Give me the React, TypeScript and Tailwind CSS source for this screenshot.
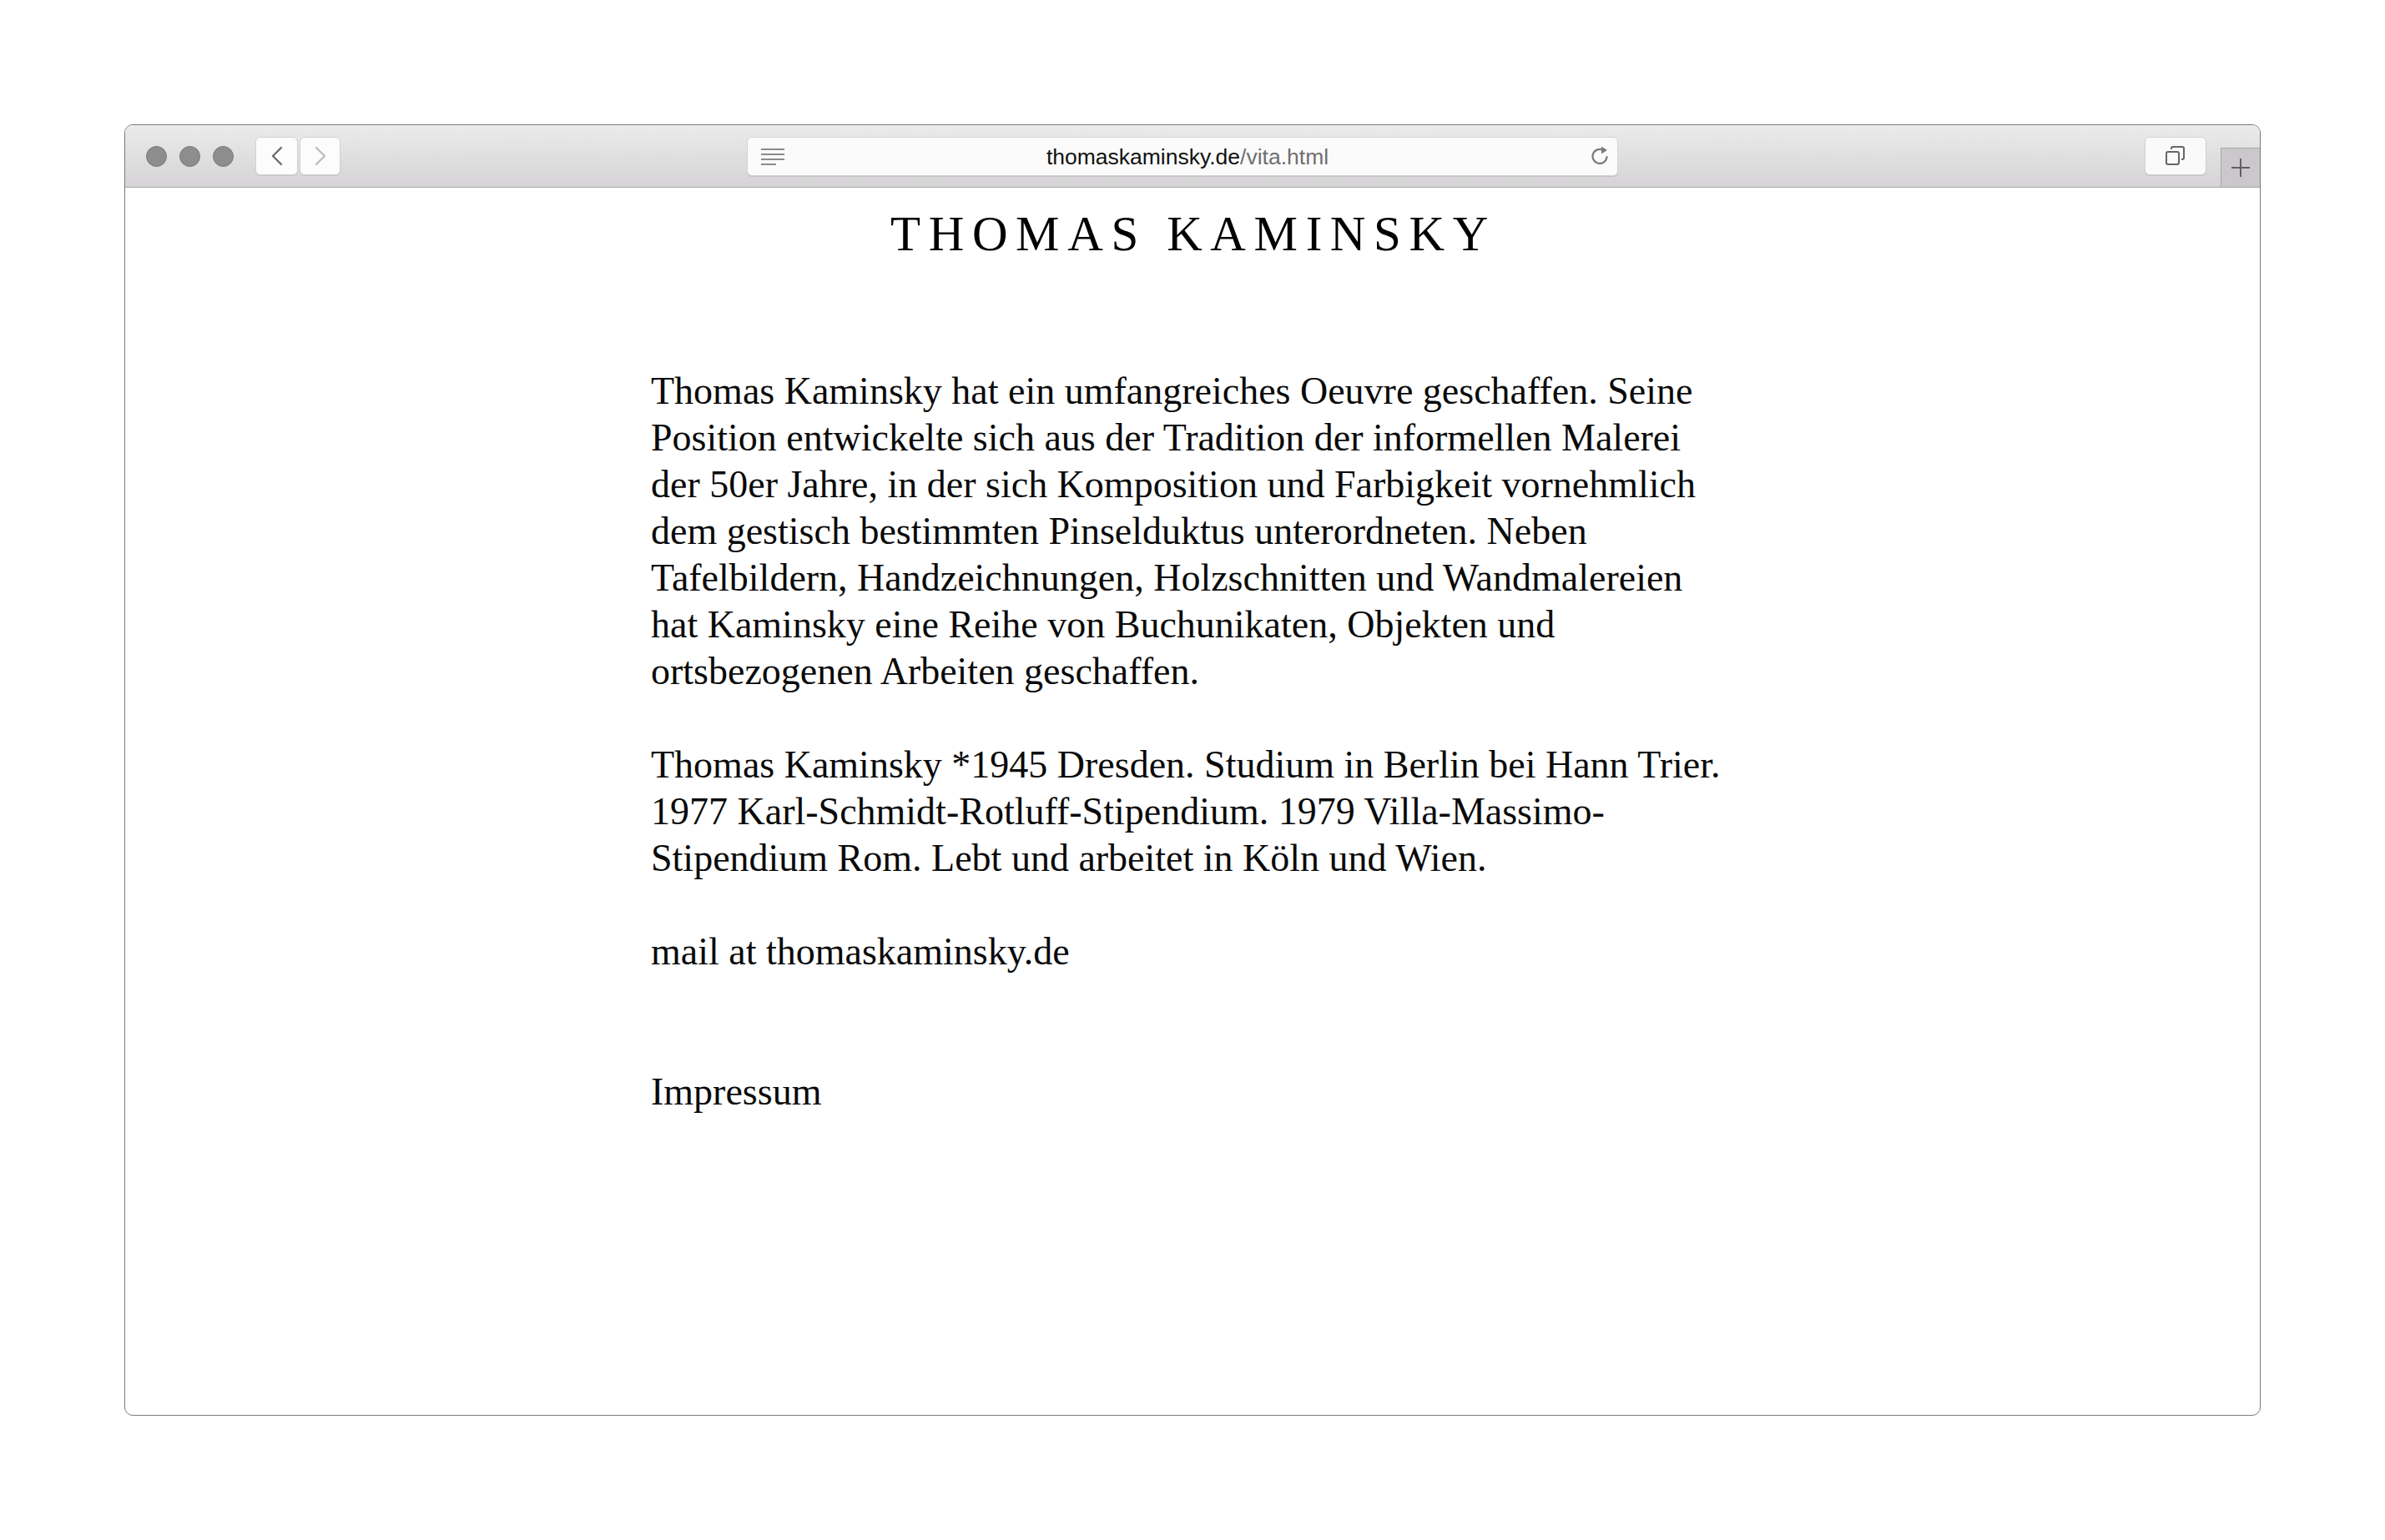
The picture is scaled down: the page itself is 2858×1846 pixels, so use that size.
import React from "react";

const serif = { fontFamily: '"Liberation Serif", "Times New Roman", serif' };
const sans = { fontFamily: '"Liberation Sans", Arial, sans-serif' };

const para1 = [
  "Thomas Kaminsky hat ein umfangreiches Oeuvre geschaffen. Seine",
  "Position entwickelte sich aus der Tradition der informellen Malerei",
  "der 50er Jahre, in der sich Komposition und Farbigkeit vornehmlich",
  "dem gestisch bestimmten Pinselduktus unterordneten. Neben",
  "Tafelbildern, Handzeichnungen, Holzschnitten und Wandmalereien",
  "hat Kaminsky eine Reihe von Buchunikaten, Objekten und",
  "ortsbezogenen Arbeiten geschaffen.",
];

const para2 = [
  "Thomas Kaminsky *1945 Dresden. Studium in Berlin bei Hann Trier.",
  "1977 Karl-Schmidt-Rotluff-Stipendium. 1979 Villa-Massimo-",
  "Stipendium Rom. Lebt und arbeitet in Köln und Wien.",
];

function TrafficLights() {
  return (
    <div className="flex items-center gap-[15px]">
      {[0, 1, 2].map((i) => (
        <span
          key={i}
          className="block h-[25px] w-[25px] rounded-full border border-[#787878] bg-[#8d8d8d]"
        />
      ))}
    </div>
  );
}

function NavButtons() {
  return (
    <div className="flex items-center gap-[2px]">
      <button className="flex h-[46px] w-[51px] items-center justify-center rounded-[6px] border border-[#d2d0d2] bg-[#fcfcfc] shadow-[0_1px_0_rgba(0,0,0,0.08)]">
        <svg width="16" height="24" viewBox="0 0 16 24" fill="none">
          <path d="M13 2 L3 12 L13 22" stroke="#6b6b6b" strokeWidth="2.4" strokeLinecap="round" strokeLinejoin="round" />
        </svg>
      </button>
      <button className="flex h-[46px] w-[49px] items-center justify-center rounded-[6px] border border-[#d2d0d2] bg-[#fcfcfc] shadow-[0_1px_0_rgba(0,0,0,0.08)]">
        <svg width="16" height="24" viewBox="0 0 16 24" fill="none">
          <path d="M3 2 L13 12 L3 22" stroke="#bdbdbd" strokeWidth="2.4" strokeLinecap="round" strokeLinejoin="round" />
        </svg>
      </button>
    </div>
  );
}

function AddressBar() {
  return (
    <div className="flex h-[47px] w-[1044px] items-center rounded-[6px] border border-[#d4d2d4] bg-[#fbfbfb] pl-[15px] pr-[9px] shadow-[0_1px_0_rgba(0,0,0,0.1)]">
      <svg width="30" height="22" viewBox="0 0 30 22" fill="none">
        <path d="M1 3 H29 M1 9 H29 M1 15 H29 M1 21 H19" stroke="#8a8a8a" strokeWidth="2.2" />
      </svg>
      <div className="flex-1 pt-[3px] text-center text-[26.5px] leading-none" style={sans}>
        <span className="text-[#111]">thomaskaminsky.de</span>
        <span className="text-[#6f6f6f]">/vita.html</span>
      </div>
      <svg width="24" height="26" viewBox="0 0 24 26" fill="none">
        <path d="M16.5 6.2 A8.5 8.5 0 1 0 20.5 14" stroke="#7b7b7b" strokeWidth="2.2" strokeLinecap="round" />
        <path d="M14 1.5 L21 6 L14 10.5 Z" fill="#7b7b7b" />
      </svg>
    </div>
  );
}

function Toolbar() {
  return (
    <div className="flex h-[75px] items-center border-b border-[#a8a8a8] bg-gradient-to-b from-[#ecebec] to-[#d5d3d5] pl-[25px]">
      <TrafficLights />
      <div className="ml-[26px]">
        <NavButtons />
      </div>
      <div className="ml-[487px]">
        <AddressBar />
      </div>
      <div className="flex-1" />
      <button className="flex h-[46px] w-[74px] items-center justify-center rounded-[6px] border border-[#d2d0d2] bg-[#fafafa] shadow-[0_1px_0_rgba(0,0,0,0.08)]">
        <svg width="26" height="26" viewBox="0 0 26 26" fill="none">
          <rect x="2" y="8" width="15" height="15" rx="2" stroke="#666" strokeWidth="2" />
          <path d="M8 5 V4 A2 2 0 0 1 10 2 H21 A2 2 0 0 1 23 4 V15 A2 2 0 0 1 21 17 H20" stroke="#666" strokeWidth="2" />
        </svg>
      </button>
      <div className="ml-[17px] flex h-[47px] w-[47px] items-center justify-center self-end border-l border-t border-[#a8a8a8] bg-[#cac8ca]">
        <svg width="24" height="24" viewBox="0 0 24 24" fill="none">
          <path d="M12 1 V23 M1 12 H23" stroke="#5f5f5f" strokeWidth="2" />
        </svg>
      </div>
    </div>
  );
}

export default function App() {
  return (
    <div className="min-h-screen w-full bg-white pl-[149px] pt-[149px]">
      <div className="flex h-[1548px] w-[2560px] flex-col overflow-hidden rounded-[10px] border border-[#7a7a7a] bg-white">
        <Toolbar />
        <div className="flex-1 text-black" style={serif}>
          <h1 className="pl-[2px] pt-[20px] text-center text-[59px] font-normal leading-[71px] tracking-[9.6px]">
            THOMAS KAMINSKY
          </h1>
          <div className="ml-[630px] mt-[125px] text-[46px] leading-[56px] text-[#0a0a0a]">
            <p>
              {para1.map((line) => (
                <span key={line} className="block whitespace-nowrap">
                  {line}
                </span>
              ))}
            </p>
            <p className="mt-[56px]">
              {para2.map((line) => (
                <span key={line} className="block whitespace-nowrap">
                  {line}
                </span>
              ))}
            </p>
            <p className="mt-[56px]">mail at thomaskaminsky.de</p>
            <p className="mt-[112px]">Impressum</p>
          </div>
        </div>
      </div>
    </div>
  );
}
